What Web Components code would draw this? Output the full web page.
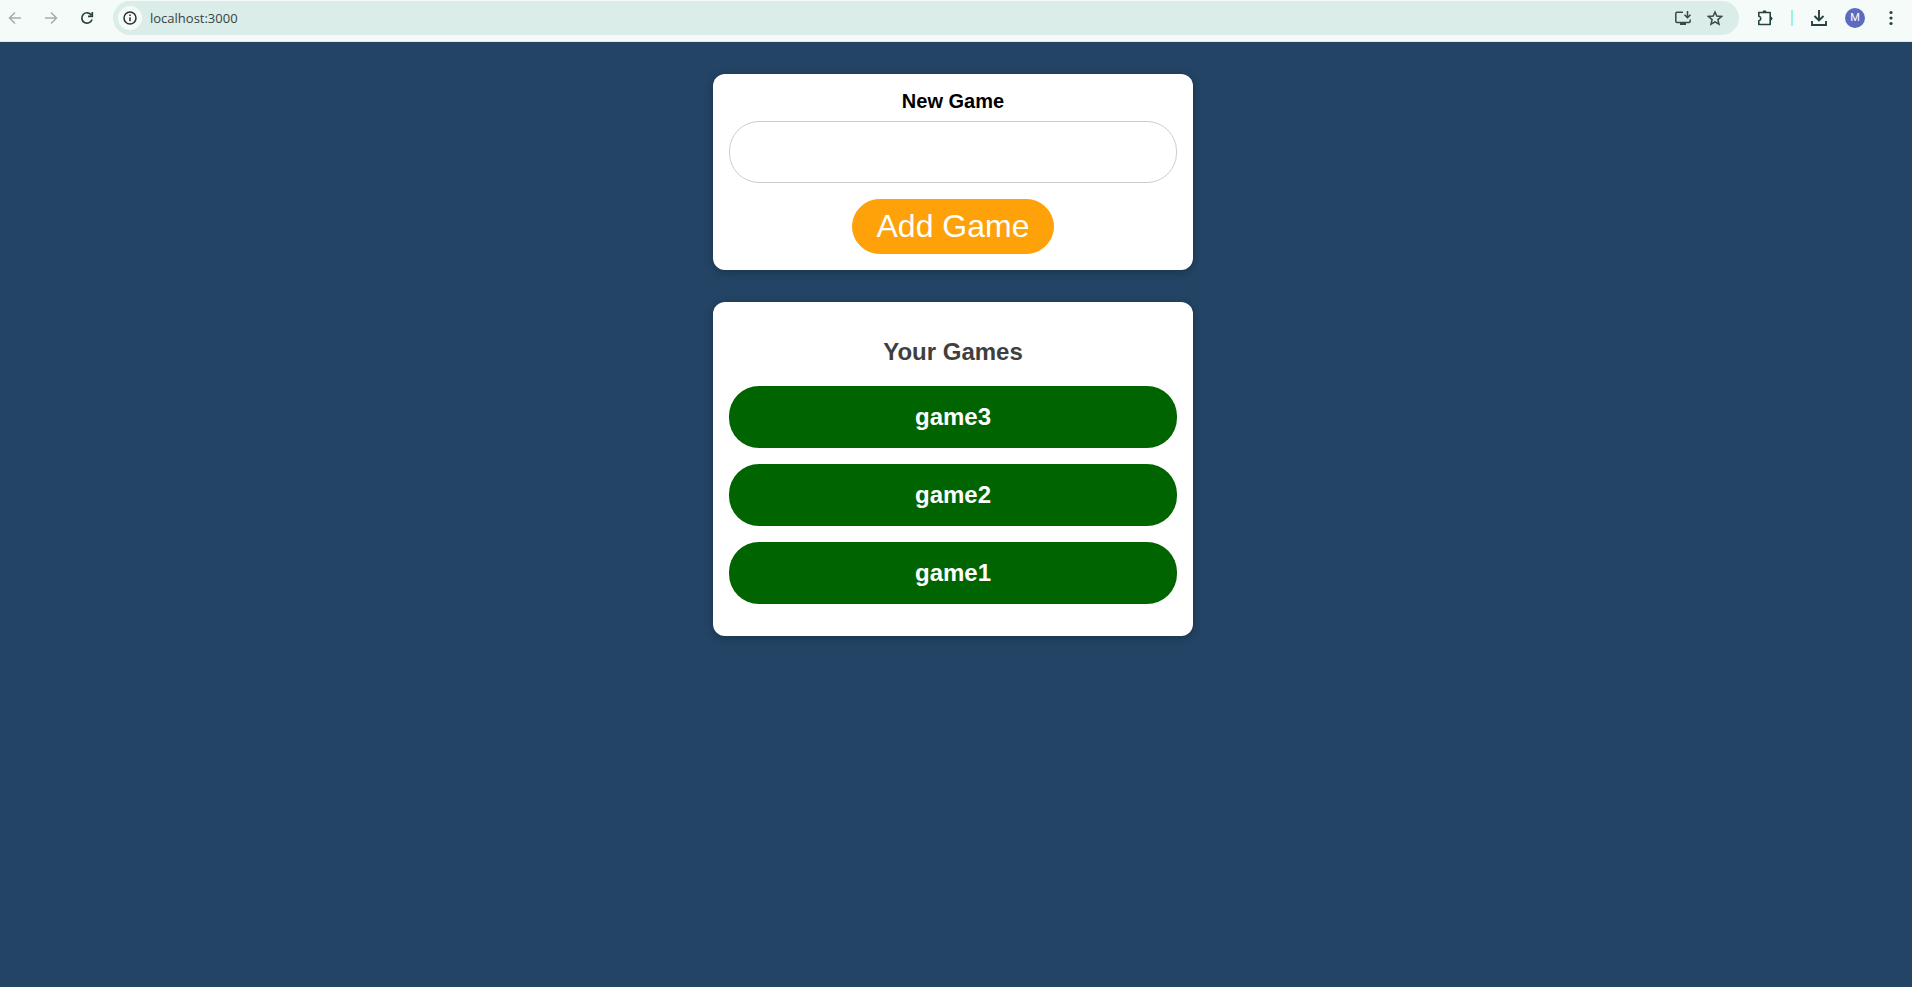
<!DOCTYPE html>
<html lang="en">
<head>
<meta charset="utf-8">
<meta name="viewport" content="width=device-width, initial-scale=1">
<title>Games</title>
<style>
  html { height: 100%; }
  body {
    margin: 0;
    min-height: 100%;
    background: #234465;
    font-family: "Liberation Sans", Arial, sans-serif;
  }
</style>
</head>
<body>
<browser-toolbar></browser-toolbar>
<games-page>
  <ui-card><new-game-form></new-game-form></ui-card>
  <ui-card>
    <game-list heading="Your Games">
      <game-item>game3</game-item>
      <game-item>game2</game-item>
      <game-item>game1</game-item>
    </game-list>
  </ui-card>
</games-page>

<script>
const define = (name, html, setup) => {
  const template = document.createElement('template');
  template.innerHTML = html;
  customElements.define(name, class extends HTMLElement {
    constructor() {
      super();
      this.attachShadow({ mode: 'open' }).append(template.content.cloneNode(true));
    }
    connectedCallback() { if (setup) setup(this); }
  });
};

define('tool-button', `
  <style>
    :host { display: flex; flex: none; color: #27433f; }
    button { display: flex; align-items: center; justify-content: center; width: 20px; height: 28px; margin: 0; padding: 0; border: 0; background: none; color: inherit; }
    ::slotted(svg) { display: block; flex: none; }
  </style>
  <button type="button"><slot></slot></button>`,
  host => host.shadowRoot.querySelector('button').setAttribute('aria-label', host.getAttribute('label')));

define('address-bar', `
  <style>
    :host { display: flex; align-items: center; flex: 1; height: 34px; box-sizing: border-box; padding: 0 14px 0 5px; border-radius: 17px; background: #daede8; min-width: 0; }
    .site { display: flex; align-items: center; justify-content: center; width: 24px; height: 24px; flex: none; padding: 0; border: 0; border-radius: 50%; background: #f5fbf9; }
    input { flex: 1; min-width: 0; height: 24px; margin: 0; padding: 0 8px; border: 0; outline: 0; background: none; color: #38433f; font: 13px/24px "Open Sans", "Noto Sans", sans-serif; }
    tool-button { margin-left: 12px; color: #3c4845; }
  </style>
  <button class="site" type="button" aria-label="Site information">
    <svg width="14" height="14" viewBox="0 0 14 14" fill="none" stroke="#27312f" stroke-width="1.5"><circle cx="7" cy="7" r="6"/><path d="M7 6.3v4M7 3.4v1.5"/></svg>
  </button>
  <input type="text" value="localhost:3000" aria-label="Address">
  <tool-button label="Install app">
    <svg width="18" height="16" viewBox="0 0 18 16" fill="none" stroke="currentColor" stroke-width="1.5"><path d="M9 2.200H3Q1.800 2.200 1.800 3.400v7.800q0 1.200 1.200 1.200h12q1.200 0 1.200-1.200V9.500M13.500 1v6.300M10.500 4.800l3 3 3-3"/><path d="M6 13h6v2H6z" fill="currentColor" stroke="none"/></svg>
  </tool-button>
  <tool-button label="Bookmark">
    <svg width="16" height="16" viewBox="0 0 16 16" fill="none" stroke="currentColor" stroke-width="1.5"><path d="M8 2l1.800 4.100 4.700.4-3.600 3.100 1.100 4.600L8 11.800l-4 2.400 1.100-4.600L1.500 6.500l4.700-.4z"/></svg>
  </tool-button>`);

define('browser-toolbar', `
  <style>
    :host { display: flex; height: 42px; box-sizing: border-box; padding: 1px 11px 6px 5px; align-items: center; background: #f5fbf9; border-bottom: 1px solid #dfe8e6; }
    nav { display: flex; gap: 16px; margin-right: 16px; }
    .off { color: #a5adab; }
    .tools { display: flex; align-items: center; gap: 16px; margin-left: 16px; }
    .rule { width: 2px; height: 16px; background: #9cf1e5; }
    .avatar { width: 20px; height: 20px; padding: 0; border: 0; border-radius: 50%; background: #5c6bc0; color: #fff; font: 11px/20px Roboto, sans-serif; text-align: center; }
  </style>
  <nav aria-label="History">
    <tool-button class="off" label="Back"><svg width="14" height="14" viewBox="0 0 14 14" fill="none" stroke="currentColor" stroke-width="1.5"><path d="M13 7H2M7 1.500L1.500 7 7 12.500"/></svg></tool-button>
    <tool-button class="off" label="Forward"><svg width="14" height="14" viewBox="0 0 14 14" fill="none" stroke="currentColor" stroke-width="1.5"><path d="M1 7h11M7 1.500L12.500 7 7 12.500"/></svg></tool-button>
    <tool-button label="Reload"><svg width="14" height="14" viewBox="0 0 14 14" fill="none" stroke="currentColor" stroke-width="1.700"><path d="M12 8.500A5.200 5.200 0 1 1 11.300 4M12.300 1v4.300H8"/></svg></tool-button>
  </nav>
  <address-bar></address-bar>
  <div class="tools">
    <tool-button label="Extensions"><svg width="18" height="18" viewBox="0 0 18 18" fill="none" stroke="currentColor" stroke-width="1.600" stroke-linejoin="round"><path d="M2.800 3.500h11.400v12H2.800v-3.800q2-.4 2-2.200t-2-2.200z"/><path d="M6.500 3.500a2 2.300 0 0 1 4 0zM14.200 7.500a2.300 2 0 0 1 0 4z" fill="currentColor" stroke="none"/></svg></tool-button>
    <span class="rule"></span>
    <tool-button label="Downloads"><svg width="18" height="18" viewBox="0 0 18 18" fill="none" stroke="currentColor" stroke-width="1.900"><path d="M9 1v10M4.500 7L9 11.500 13.500 7M2 12v4h14v-4"/></svg></tool-button>
    <button class="avatar" type="button">M</button>
    <tool-button label="Menu"><svg width="4" height="16" viewBox="0 0 4 16" fill="currentColor"><circle cx="2" cy="2.500" r="1.600"/><circle cx="2" cy="8" r="1.600"/><circle cx="2" cy="13.500" r="1.600"/></svg></tool-button>
  </div>`);

define('games-page', `
  <style>
    :host { display: block; }
    main { display: flex; flex-direction: column; align-items: center; gap: 32px; padding: 32px 6px 32px 0; }
    ::slotted(*) { width: 100%; max-width: 480px; }
  </style>
  <main><slot></slot></main>`);

define('ui-card', `
  <style>
    :host { display: block; box-sizing: border-box; padding: 16px; border-radius: 12px; background: #fff; box-shadow: 0 2px 8px rgba(0, 0, 0, .26); }
  </style>
  <slot></slot>`);

define('new-game-form', `
  <style>
    :host { display: block; }
    form { display: flex; flex-direction: column; align-items: center; }
    label { margin-bottom: 8px; font-weight: bold; font-size: 20px; line-height: 23px; color: #000; }
    input { box-sizing: border-box; width: 100%; height: 62px; margin: 0 0 16px; padding: 8px 24px; border: 1px solid #ccc; border-radius: 30px; background: #fff; font: 24px/28px "Liberation Sans", Arial, sans-serif; }
    button { padding: 8px 24px; border: 1px solid #ffa108; border-radius: 28px; background: #ffa108; color: #fff; font: 32px/37px "Liberation Sans", Arial, sans-serif; }
  </style>
  <form>
    <label for="name">New Game</label>
    <input id="name" type="text">
    <button type="button">Add Game</button>
  </form>`);

define('game-list', `
  <style>
    :host { display: block; }
    h2 { margin: 20px 0; font-size: 24px; line-height: 28px; text-align: center; color: #3f3f3f; }
    .items { display: flex; flex-direction: column; gap: 16px; margin-bottom: 16px; }
  </style>
  <h2></h2>
  <div class="items" role="list"><slot></slot></div>`,
  host => { host.shadowRoot.querySelector('h2').textContent = host.getAttribute('heading'); });

define('game-item', `
  <style>
    :host { display: block; }
    button { display: block; width: 100%; padding: 17px 16px; border: 0; border-radius: 30px; background: #006400; color: #fff; font: bold 24px/28px "Liberation Sans", Arial, sans-serif; text-align: center; }
  </style>
  <button type="button"><slot></slot></button>`,
  host => host.setAttribute('role', 'listitem'));
</script>
</body>
</html>
